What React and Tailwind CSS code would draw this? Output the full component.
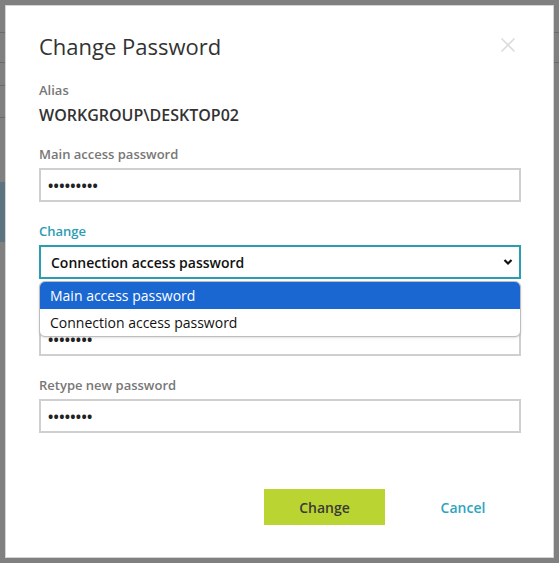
import React from "react";

const font = { fontFamily: '"Open Sans", "Noto Sans", Arial, sans-serif' };

function Dots({ n }) {
  return (
    <span className="tracking-[0.3px] text-[14px] font-bold text-[#222]">{"•".repeat(n)}</span>
  );
}

function Field({ label, n }) {
  return (
    <div className="mt-[20px]">
      <div className="h-[18px] text-[13px] leading-[18px] font-semibold text-[#777]">{label}</div>
      <div className="mt-[5px] h-[34px] border-2 border-[#cfcfcf] flex items-center pl-[7px]">
        <Dots n={n} />
      </div>
    </div>
  );
}

export default function App() {
  return (
    <div className="relative w-[559px] h-[563px] bg-[#808080] overflow-hidden" style={font}>
      {/* background page (dimmed) */}
      <div className="flex flex-col w-[5px] pt-[32px]">
        <div className="h-[1px] bg-[#6a6a6a]" />
        <div className="h-[29px]" />
        <div className="h-[1px] bg-[#6a6a6a]" />
        <div className="h-[22px]" />
        <div className="h-[1px] bg-[#6a6a6a]" />
        <div className="h-[31px]" />
        <div className="h-[1px] bg-[#6a6a6a]" />
        <div className="h-[64px]" />
        <div className="h-[60px] bg-[#5c7480]" />
      </div>
      <div className="absolute right-0 top-0 w-[5px] flex flex-col pt-[32px]">
        <div className="h-[1px] bg-[#6a6a6a]" />
        <div className="h-[29px]" />
        <div className="h-[1px] bg-[#6a6a6a]" />
      </div>

      {/* dialog */}
      <div className="absolute left-[5px] top-[5px] w-[549px] h-[553px] bg-white border border-[#d4d4d4] text-[#333]">
        <div className="pl-[33px] pr-[32px] pt-[25px]">
          <div className="flex items-center justify-between">
            <div className="text-[22px] leading-[30px] text-[#333]">Change Password</div>
            <svg width="16" height="16" viewBox="0 0 16 16" className="mr-[5px] mt-[-2px]">
              <path d="M1.5 1.5 L14.5 14.5 M14.5 1.5 L1.5 14.5" stroke="#dcdcdc" strokeWidth="1.6" />
            </svg>
          </div>

          <div className="mt-[20px] text-[13px] leading-[18px] font-semibold text-[#777]">Alias</div>
          <div className="mt-[6px] text-[16px] leading-[20px] font-semibold text-[#333]">WORKGROUP\DESKTOP02</div>

          <Field label="Main access password" n={9} />

          <div className="relative">
            <div className="mt-[20px] text-[13px] leading-[18px] font-semibold text-[#2b9db3]">Change</div>
            <div className="mt-[5px] h-[34px] border-2 border-[#2b9db3] flex items-center justify-between pl-[10px] pr-[6px]">
              <span className="text-[14px] font-semibold text-[#111]">Connection access password</span>
              <svg width="10" height="8" viewBox="0 0 10 8">
                <path d="M1.5 2 L5 5.5 L8.5 2" fill="none" stroke="#111" strokeWidth="2.2" />
              </svg>
            </div>

            <Field label="" n={8} />

            {/* open dropdown list */}
            <div className="absolute left-0 right-0 top-[59px] h-[56px] bg-white border border-[#bdbdbd] rounded-[6px] overflow-hidden shadow-sm">
              <div className="h-[27px] bg-[#1a67d2] text-white text-[14px] flex items-center pl-[10px]">
                Main access password
              </div>
              <div className="h-[27px] text-[#111] text-[14px] flex items-center pl-[10px]">
                Connection access password
              </div>
            </div>
          </div>

          <Field label="Retype new password" n={8} />

          <div className="mt-[56px] flex justify-end gap-[20px]">
            <button className="w-[121px] h-[36px] bg-[#bad531] text-[14px] font-semibold text-[#3a3a3a]">
              Change
            </button>
            <button className="w-[116px] h-[36px] text-[14px] font-semibold text-[#2ea3c0]">
              Cancel
            </button>
          </div>
        </div>
      </div>
    </div>
  );
}
